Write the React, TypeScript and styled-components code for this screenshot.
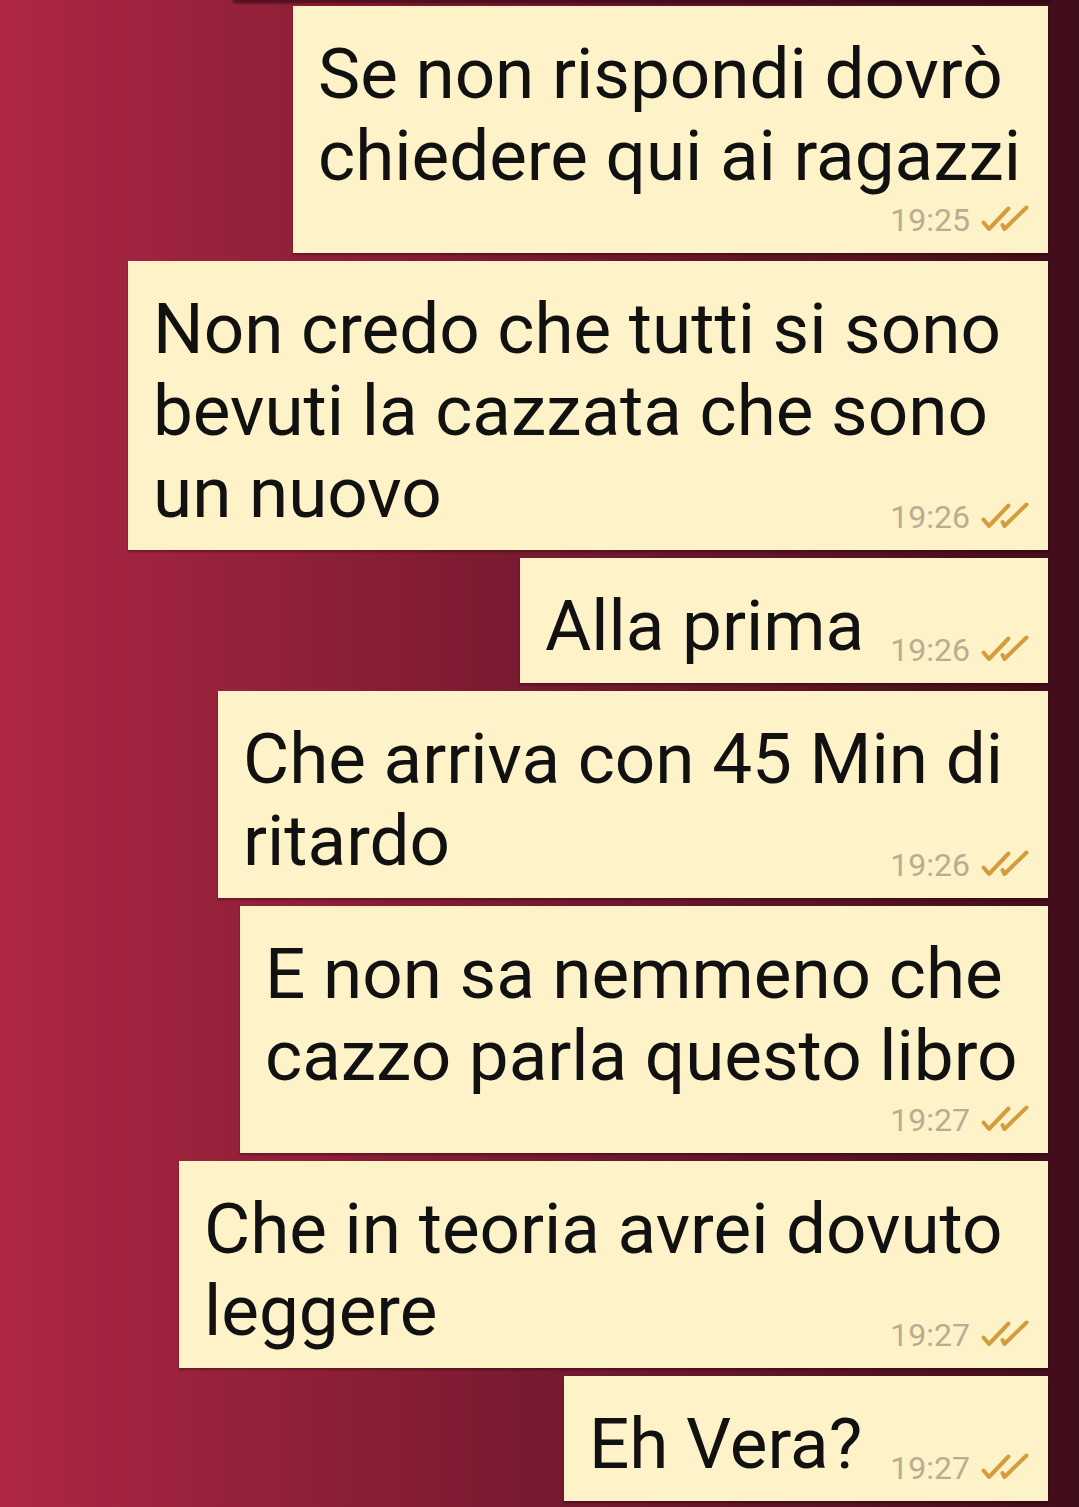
import React from 'react';
import styled, { createGlobalStyle } from 'styled-components';

const GlobalStyle = createGlobalStyle`
  html, body {
    margin: 0;
    padding: 0;
  }
  body {
    font-family: Roboto, "Noto Sans", "Liberation Sans", sans-serif;
    background: #400d1b;
  }
`;

const Screen = styled.div`
  width: 1079px;
  height: 1507px;
  overflow: hidden;
  box-sizing: border-box;
  background: linear-gradient(to right, #ae2744 0%, #400d1b 100%);
  display: flex;
  flex-direction: column;
  align-items: flex-end;
  gap: 8px;
  padding-right: 31px;
`;

// bottom edge of the bubble scrolled off above
const PrevEdge = styled.div`
  width: 813px;
  height: 0;
  margin-bottom: -2px;
  box-shadow: 0 1px 3px 2px rgba(40, 6, 14, 0.7);
`;

const Bubble = styled.div<{ $width: number }>`
  width: ${p => p.$width}px;
  box-sizing: border-box;
  background: #fdf2c8;
  padding: 27px 18px 14px 25px;
  box-shadow: 0 2px 2px rgba(30, 4, 10, 0.35);
  display: flex;
  flex-direction: column;
`;

const Text = styled.div<{ $pad?: boolean }>`
  font-size: 71px;
  line-height: 82px;
  color: #111;
  white-space: pre;
  padding-bottom: ${p => (p.$pad ? '2px' : '0')};
`;

const LastRow = styled.div`
  display: flex;
  justify-content: space-between;
  align-items: flex-end;
`;

const Meta = styled.div<{ $wrap?: boolean }>`
  align-self: flex-end;
  display: flex;
  align-items: center;
  gap: 10px;
  margin-top: ${p => (p.$wrap ? '2px' : '0')};
`;

const Time = styled.span`
  font-size: 32px;
  line-height: 38px;
  color: #b8ad91;
`;

const Ticks = styled.svg`
  width: 50px;
  height: 28px;
  margin-top: -4px;
  flex: none;
`;

const DoubleCheck = () => (
  <Ticks viewBox="0 0 50 28" fill="none" stroke="#d59c3c" strokeWidth={4} strokeLinecap="round" strokeLinejoin="round">
    <path d="M3.5 18.5 L9 25 L28.5 4.5" />
    <path d="M22.5 21 L24.5 25 L46.5 3.5" />
  </Ticks>
);

type Message = { lines: string[]; time: string; width: number; wrap: boolean };

const messages: Message[] = [
  { lines: ['Se non rispondi dovrò', 'chiedere qui ai ragazzi'], time: '19:25', width: 755, wrap: true },
  { lines: ['Non credo che tutti si sono', 'bevuti la cazzata che sono', 'un nuovo'], time: '19:26', width: 920, wrap: false },
  { lines: ['Alla prima'], time: '19:26', width: 528, wrap: false },
  { lines: ['Che arriva con 45 Min di', 'ritardo'], time: '19:26', width: 830, wrap: false },
  { lines: ['E non sa nemmeno che', 'cazzo parla questo libro'], time: '19:27', width: 808, wrap: true },
  { lines: ['Che in teoria avrei dovuto', 'leggere'], time: '19:27', width: 869, wrap: false },
  { lines: ['Eh Vera?'], time: '19:27', width: 484, wrap: false },
];

const MessageBubble = ({ m }: { m: Message }) => {
  const meta = (
    <Meta $wrap={m.wrap}>
      <Time>{m.time}</Time>
      <DoubleCheck />
    </Meta>
  );

  if (m.wrap) {
    return (
      <Bubble $width={m.width}>
        <Text $pad>{m.lines.join('\n')}</Text>
        {meta}
      </Bubble>
    );
  }

  const body = m.lines.slice(0, -1);
  const last = m.lines[m.lines.length - 1];
  return (
    <Bubble $width={m.width}>
      {body.length > 0 && <Text>{body.join('\n')}</Text>}
      <LastRow>
        <Text $pad>{last}</Text>
        {meta}
      </LastRow>
    </Bubble>
  );
};

export default function App() {
  return (
    <>
      <GlobalStyle />
      <Screen>
        <PrevEdge />
        {messages.map((m, i) => (
          <MessageBubble key={i} m={m} />
        ))}
      </Screen>
    </>
  );
}
